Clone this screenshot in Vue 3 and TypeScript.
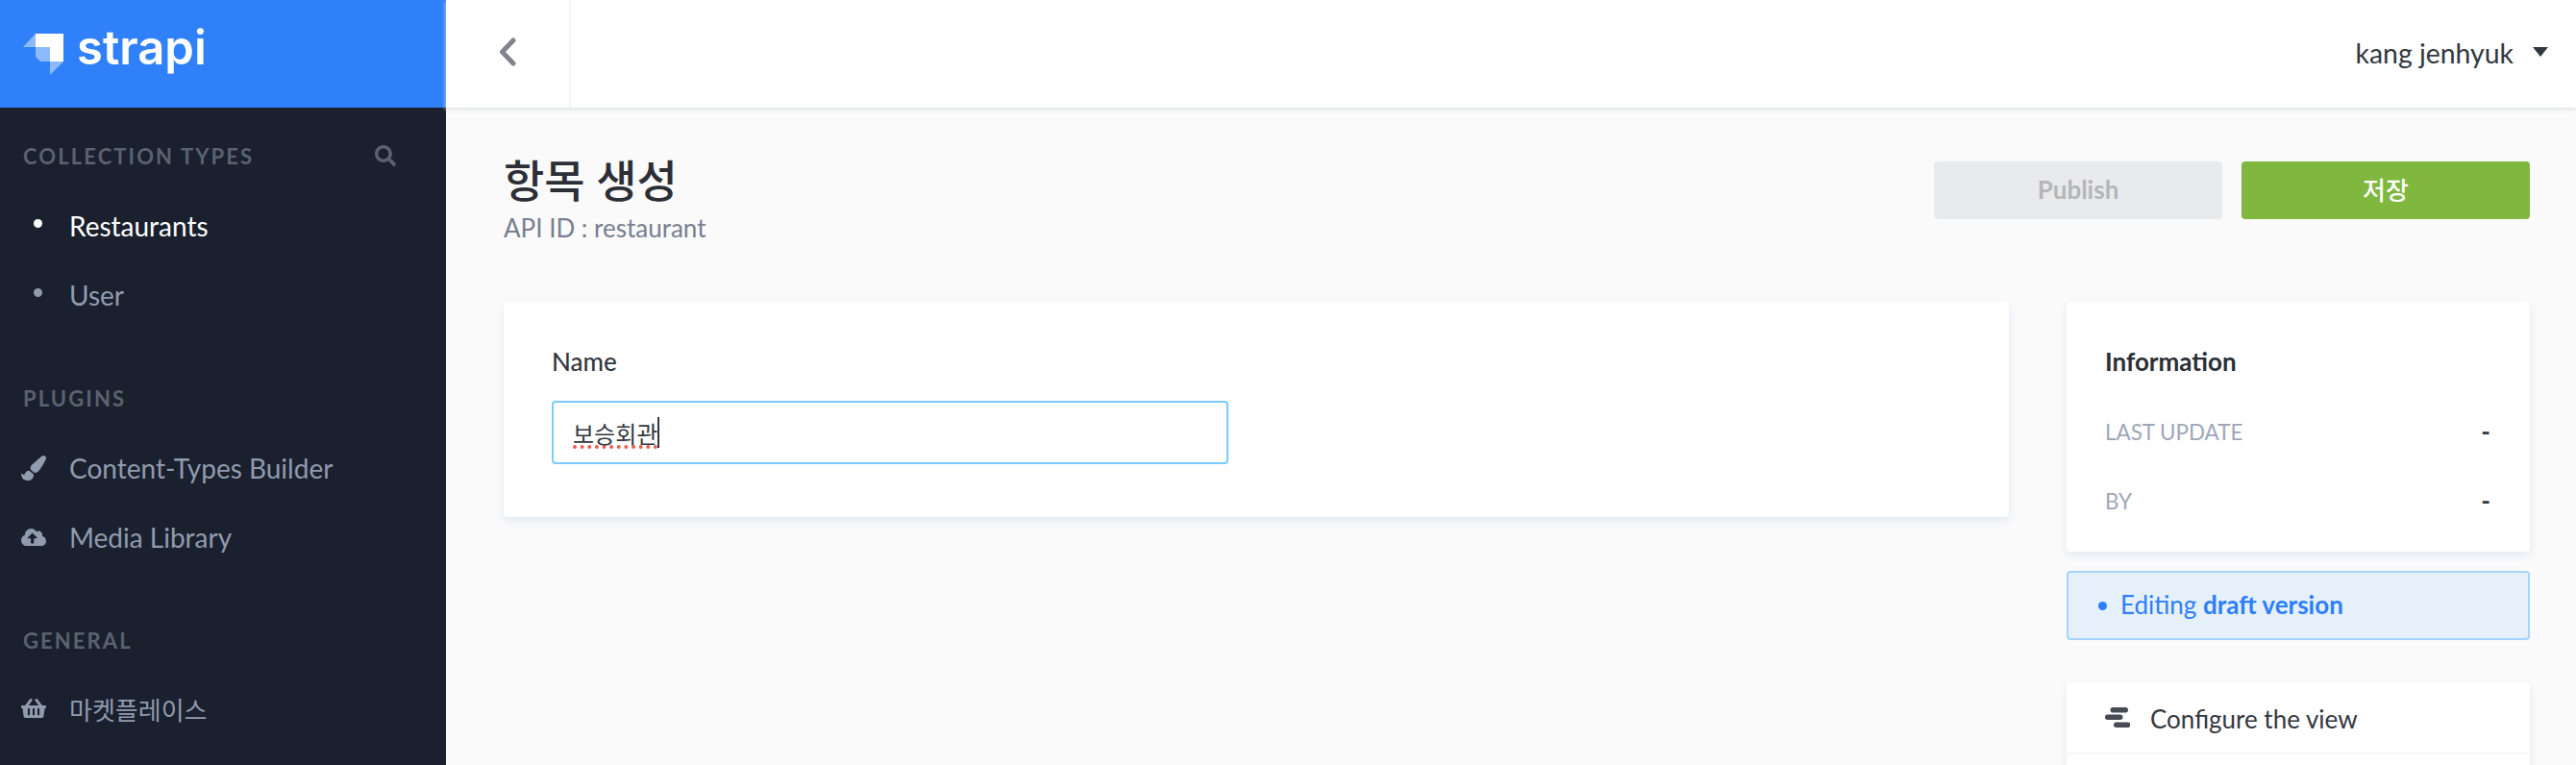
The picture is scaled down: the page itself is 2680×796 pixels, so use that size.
<script setup lang="ts">
interface NavLink {
  label: string;
  active?: boolean;
  cjk?: boolean;
  icon?: "brush" | "cloud" | "basket";
}

interface NavSection {
  title: string;
  search?: boolean;
  links: NavLink[];
}

const sections: NavSection[] = [
  {
    title: "COLLECTION TYPES",
    search: true,
    links: [{ label: "Restaurants", active: true }, { label: "User" }],
  },
  {
    title: "PLUGINS",
    links: [
      { label: "Content-Types Builder", icon: "brush" },
      { label: "Media Library", icon: "cloud" },
    ],
  },
  {
    title: "GENERAL",
    links: [{ label: "마켓플레이스", icon: "basket", cjk: true }],
  },
];

const iconShapes = {
  brush: {
    box: "0 0 512 512",
    d: "M167.02 309.34c-40.12 2.58-76.53 17.86-97.19 72.3-2.35 6.21-8 9.98-14.59 9.98-11.11 0-45.46-27.67-55.25-34.35C0 439.62 37.93 512 128 512c75.86 0 128-43.77 128-120.19 0-3.11-.65-6.08-.97-9.13l-88.01-73.34zM457.89 0c-15.16 0-29.37 6.71-40.21 16.45C213.27 199.05 192 203.34 192 257.09c0 13.7 3.25 26.76 8.73 38.7l63.82 53.18c7.21 1.8 14.64 3.03 22.39 3.03 62.11 0 98.11-45.47 211.16-256.46 7.38-14.35 13.9-29.85 13.9-45.99C512 20.64 486 0 457.89 0z",
  },
  cloud: {
    box: "0 0 640 512",
    d: "M537.6 226.6c4.1-10.7 6.4-22.4 6.4-34.6 0-53-43-96-96-96-19.7 0-38.1 6-53.3 16.2C367 64.2 315.3 32 256 32c-88.4 0-160 71.6-160 160 0 2.7.1 5.4.2 8.1C40.2 219.8 0 273.2 0 336c0 79.5 64.5 144 144 144h368c70.7 0 128-57.3 128-128 0-61.9-44-113.6-102.4-125.4zM393.4 288H328v112c0 8.8-7.2 16-16 16h-48c-8.8 0-16-7.2-16-16V288h-65.4c-14.3 0-21.4-17.2-11.3-27.3l105.4-105.4c6.2-6.2 16.4-6.2 22.6 0l105.4 105.4c10.1 10.1 2.9 27.3-11.3 27.3z",
  },
  basket: {
    box: "0 0 576 512",
    d: "M576 216v16c0 13.255-10.745 24-24 24h-8l-26.113 182.788C514.509 462.435 494.257 480 470.37 480H105.63c-23.887 0-44.139-17.565-47.518-41.212L32 256h-8c-13.255 0-24-10.745-24-24v-16c0-13.255 10.745-24 24-24h67.341l106.78-146.821c10.395-14.292 30.407-17.453 44.701-7.058 14.293 10.395 17.453 30.408 7.058 44.701L170.477 192h235.046L326.12 82.821c-10.395-14.292-7.234-34.306 7.059-44.701 14.291-10.395 34.306-7.235 44.701 7.058L484.659 192H552c13.255 0 24 10.745 24 24zM312 392V280c0-13.255-10.745-24-24-24s-24 10.745-24 24v112c0 13.255 10.745 24 24 24s24-10.745 24-24zm112 0V280c0-13.255-10.745-24-24-24s-24 10.745-24 24v112c0 13.255 10.745 24 24 24s24-10.745 24-24zm-224 0V280c0-13.255-10.745-24-24-24s-24 10.745-24 24v112c0 13.255 10.745 24 24 24s24-10.745 24-24z",
  },
};

const infoRows = [
  { label: "LAST UPDATE", value: "-" },
  { label: "BY", value: "-" },
];
</script>

<template>
  <div class="app">
    <aside class="sidebar">
      <div class="brand">
        <svg class="brand-mark" viewBox="0 0 42 43" aria-hidden="true">
          <path d="M13 0h29v29H28V14H13z" fill="#fff" />
          <path d="M13 0v14H0z" fill="#fff" fill-opacity="0.45" />
          <path d="M13 14h15v15H18l-5-5z" fill="#fff" fill-opacity="0.45" />
          <path d="M28 29h14L28 43z" fill="#fff" fill-opacity="0.45" />
        </svg>
        <span class="brand-name">strapi</span>
      </div>
      <nav class="nav">
        <section v-for="section in sections" :key="section.title" class="nav-section">
          <div class="nav-title">
            <span>{{ section.title }}</span>
            <svg v-if="section.search" class="nav-search" viewBox="0 0 512 512" aria-hidden="true">
              <path
                d="M505 442.7L405.3 343c-4.5-4.5-10.6-7-17-7H372c27.6-35.3 44-79.7 44-128C416 93.1 322.9 0 208 0S0 93.1 0 208s93.1 208 208 208c48.3 0 92.7-16.4 128-44v16.3c0 6.4 2.5 12.5 7 17l99.7 99.7c9.4 9.4 24.6 9.4 33.9 0l28.3-28.3c9.4-9.4 9.4-24.6.1-34zM208 336c-70.7 0-128-57.2-128-128 0-70.7 57.2-128 128-128 70.7 0 128 57.2 128 128 0 70.7-57.2 128-128 128z"
              />
            </svg>
          </div>
          <a
            v-for="link in section.links"
            :key="link.label"
            class="nav-link"
            :class="{ active: link.active, cjk: link.cjk }"
          >
            <span class="nav-icon">
              <svg v-if="link.icon" :viewBox="iconShapes[link.icon].box" aria-hidden="true">
                <path :d="iconShapes[link.icon].d" />
              </svg>
              <i v-else class="nav-dot"></i>
            </span>
            <span>{{ link.label }}</span>
          </a>
        </section>
      </nav>
    </aside>

    <div class="page">
      <header class="topbar">
        <button class="back" aria-label="Back">
          <svg viewBox="0 0 18 30" aria-hidden="true">
            <path d="M15 3L3.5 15L15 27" />
          </svg>
        </button>
        <div class="user">
          <span>kang jenhyuk</span>
          <i class="user-caret"></i>
        </div>
      </header>

      <main class="main">
        <div class="head">
          <div>
            <h1>항목 생성</h1>
            <p>API ID : restaurant</p>
          </div>
          <div class="actions">
            <button class="btn btn-disabled">Publish</button>
            <button class="btn btn-save">저장</button>
          </div>
        </div>

        <div class="columns">
          <section class="card form-card">
            <label class="field-label">Name</label>
            <div class="field">
              <span class="field-text">보승회관</span>
              <i class="field-caret"></i>
            </div>
          </section>

          <div class="side">
            <section class="card info-card">
              <h2>Information</h2>
              <div v-for="row in infoRows" :key="row.label" class="info-row">
                <span class="info-label">{{ row.label }}</span>
                <span class="info-value">{{ row.value }}</span>
              </div>
            </section>

            <div class="draft">
              <i class="draft-dot"></i>
              <span>Editing <b>draft version</b></span>
            </div>

            <section class="card links-card">
              <div class="links-row">
                <svg viewBox="0 0 26 22" aria-hidden="true">
                  <rect x="5.5" y="0" width="18.5" height="5.5" rx="2.7" />
                  <rect x="0" y="7.5" width="18.5" height="5.5" rx="2.7" />
                  <rect x="9" y="15.5" width="17.5" height="5.5" rx="2.7" />
                </svg>
                <span>Configure the view</span>
              </div>
            </section>
          </div>
        </div>
      </main>
    </div>
  </div>
</template>

<style>
body {
  margin: 0;
  overflow: hidden;
}
</style>

<style scoped>
.app {
  display: flex;
  height: 796px;
  overflow: hidden;
  background: #fafafb;
  color: #333740;
  font-family: Lato, "Noto Sans CJK KR", sans-serif;
  font-size: 26px;
}

.sidebar {
  width: 464px;
  flex-shrink: 0;
  background: #1a202e;
}

.brand {
  display: flex;
  align-items: center;
  height: 112px;
  padding-left: 24px;
  box-sizing: border-box;
  background: #3081f9;
}

.brand-mark {
  width: 42px;
  height: 43px;
  margin-top: 1px;
}

.brand-name {
  margin-left: 14px;
  margin-top: -14px;
  font-family: Inter, sans-serif;
  font-size: 49px;
  font-weight: 600;
  line-height: 1;
  color: #fff;
}

.nav {
  padding-top: 26px;
}

.nav-section + .nav-section {
  margin-top: 47px;
}

.nav-title {
  display: flex;
  align-items: center;
  justify-content: space-between;
  height: 48px;
  margin-bottom: 13px;
  padding: 0 52px 0 24px;
  color: #5b626f;
  font-size: 22px;
  font-weight: 700;
  letter-spacing: 2.1px;
}

.nav-search {
  width: 22px;
  height: 22px;
  fill: #5b626f;
}

.nav-link {
  display: flex;
  align-items: center;
  height: 72px;
  color: #919bae;
  font-size: 28px;
}

.nav-link.cjk {
  font-size: 26px;
  margin-top: -2px;
}

.nav-link.active {
  color: #fff;
}

.nav-icon {
  display: flex;
  align-items: center;
  justify-content: center;
  width: 26px;
  margin: 0 24px 0 22px;
}

.nav-icon svg {
  width: 26px;
  height: 26px;
  fill: #919bae;
}

.nav-dot {
  width: 9px;
  height: 9px;
  margin-top: -6px;
  margin-left: 8px;
  border-radius: 50%;
  background: currentColor;
}

.page {
  flex: 1;
  min-width: 0;
}

.topbar {
  position: relative;
  display: flex;
  align-items: center;
  justify-content: space-between;
  height: 112px;
  background: #fff;
  box-shadow: 0 2px 4px #e0e1e4;
}

.back {
  display: flex;
  align-items: center;
  justify-content: center;
  width: 130px;
  height: 112px;
  padding: 0;
  border: 0;
  border-right: 2px solid #f3f4f4;
  background: none;
}

.back svg {
  width: 18px;
  height: 30px;
  margin-top: -4px;
  fill: none;
  stroke: #81848a;
  stroke-width: 5;
  stroke-linecap: round;
  stroke-linejoin: round;
}

.user {
  display: flex;
  align-items: center;
  margin-right: 29px;
  margin-top: -3px;
  font-size: 28.4px;
}

.user-caret {
  width: 0;
  height: 0;
  margin-left: 20px;
  margin-top: -2px;
  border-top: 10px solid #333740;
  border-left: 8.5px solid transparent;
  border-right: 8.5px solid transparent;
}

.main {
  padding: 50px 48px 0 60px;
}

.head {
  display: flex;
  justify-content: space-between;
  height: 152px;
}

h1 {
  margin: 0;
  font-size: 46px;
  font-weight: 500;
  line-height: 52px;
  color: #2c2f36;
}

.head p {
  margin: 8px 0 0;
  font-size: 26px;
  line-height: 30px;
  color: #787e8f;
}

.actions {
  display: flex;
  gap: 20px;
  margin-top: 6px;
}

.btn {
  width: 300px;
  height: 60px;
  padding: 0 0 3px;
  border: 0;
  border-radius: 4px;
  font-family: inherit;
  font-size: 26px;
  font-weight: 500;
}

.btn-disabled {
  background: #e9eaeb;
  color: #b4b6ba;
  font-weight: 700;
}

.btn-save {
  background: #7fb73f;
  color: #fff;
}

.columns {
  display: grid;
  grid-template-columns: 1fr 482px;
  gap: 60px;
  align-items: start;
}

.card {
  border-radius: 4px;
  background: #fff;
  box-shadow: 0 4px 8px #e3e9f3;
}

.form-card {
  height: 224px;
  box-sizing: border-box;
  padding: 45px 50px 0 50px;
}

.field-label {
  display: block;
  font-size: 26px;
  font-weight: 500;
  line-height: 34px;
}

.field {
  display: flex;
  align-items: center;
  width: 704px;
  height: 66px;
  box-sizing: border-box;
  margin-top: 24px;
  padding-left: 20px;
  border: 2px solid #78caff;
  border-radius: 4px;
}

.field-text {
  font-size: 24px;
  text-decoration: underline dotted #ec5f4e 4px;
  text-underline-offset: 3px;
}

.field-caret {
  width: 2px;
  height: 32px;
  background: #333740;
}

.info-card {
  height: 260px;
  box-sizing: border-box;
  padding: 45px 41px 0 40px;
}

h2 {
  margin: 0 0 20px;
  font-size: 26px;
  font-weight: 700;
  line-height: 34px;
  color: #2c2f36;
}

.info-row {
  display: flex;
  align-items: center;
  justify-content: space-between;
  height: 72px;
}

.info-label {
  color: #9ea7b8;
  font-size: 22.4px;
}

.info-value {
  font-weight: 700;
}

.draft {
  display: flex;
  align-items: center;
  height: 72px;
  box-sizing: border-box;
  margin-top: 20px;
  padding-left: 31px;
  padding-bottom: 2px;
  border: 2px solid #a5d5ff;
  border-radius: 4px;
  background: #e6f0fb;
  color: #2d7ff9;
}

.draft-dot {
  width: 9px;
  height: 9px;
  margin-top: 3px;
  margin-right: 14px;
  border-radius: 50%;
  background: currentColor;
}

.links-card {
  height: 240px;
  margin-top: 44px;
}

.links-row {
  display: flex;
  align-items: center;
  height: 75px;
  box-sizing: border-box;
  padding-left: 40px;
  border-bottom: 2px solid #f6f6f6;
}

.links-row svg {
  width: 26px;
  height: 22px;
  margin-right: 21px;
  fill: #474b55;
}

.links-row span {
  margin-top: 2px;
}
</style>
